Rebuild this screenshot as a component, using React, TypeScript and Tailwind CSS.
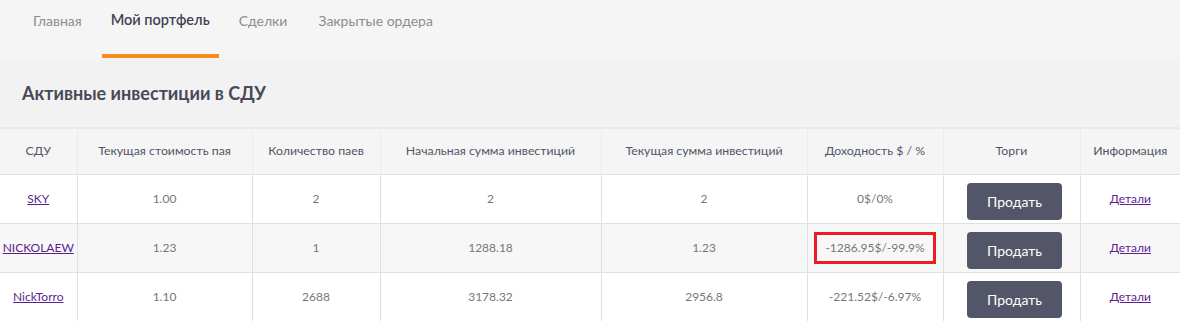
import React from "react";

const tabs = ["Главная", "Мой портфель", "Сделки", "Закрытые ордера"];

const rows = [
  { name: "SKY", price: "1.00", count: "2", start: "2", current: "2", profit: "0$/0%" },
  { name: "NICKOLAEW", price: "1.23", count: "1", start: "1288.18", current: "1.23", profit: "-1286.95$/-99.9%", marked: true },
  { name: "NickTorro", price: "1.10", count: "2688", start: "3178.32", current: "2956.8", profit: "-221.52$/-6.97%" },
];

export default function App() {
  return (
    <div className="min-h-screen bg-[#f3f3f3] font-['Lato','Open_Sans',sans-serif]">
      {/* tabs */}
      <nav className="flex h-[58px] gap-[9px] bg-[#f5f5f5] pl-[22px]">
        {tabs.map((t, i) => (
          <div
            key={t}
            className={
              "flex flex-col justify-between text-center " +
              (i === 1
                ? "w-[117px] pt-[9px] text-[14.5px] font-semibold text-[#3e4252]"
                : "px-[11px] pt-[10px] text-[14px] text-[#8c8c8c]")
            }
          >
            <span>{t}</span>
            <span className={"h-[4px] " + (i === 1 ? "bg-[#f68b1f]" : "")} />
          </div>
        ))}
      </nav>

      <div className="flex h-[69px] items-center bg-[#f2f2f2] pl-[22px] pt-[1px]">
        <h2 className="text-[18px] font-bold text-[#474a59]">Активные инвестиции в СДУ</h2>
      </div>

      <table className="w-full table-fixed border-collapse border-t-2 border-[#e9e9e9] bg-white text-center">
        <thead>
          <tr className="h-[46px] bg-[#f5f5f5] text-[12.3px] text-[#515566]">
            <th className="w-[77px] border-r border-[#ececec] font-normal">СДУ</th>
            <th className="w-[175px] border-r border-[#ececec] font-normal">Текущая стоимость пая</th>
            <th className="w-[128px] border-r border-[#ececec] font-normal">Количество паев</th>
            <th className="w-[221px] border-r border-[#ececec] font-normal">Начальная сумма инвестиций</th>
            <th className="w-[206px] border-r border-[#ececec] font-normal">Текущая сумма инвестиций</th>
            <th className="w-[136px] border-r border-[#ececec] font-normal">Доходность $ / %</th>
            <th className="w-[137px] border-r border-[#ececec] font-normal">Торги</th>
            <th className="font-normal">Информация</th>
          </tr>
        </thead>
        <tbody className="text-[12px] text-[#777777]">
          {rows.map((r, i) => (
            <tr key={r.name} className={"h-[49px] border-t border-[#e0e0e0] " + (i === 1 ? "bg-[#f7f7f7]" : "bg-white")}>
              <td className="border-r border-[#e0e0e0]">
                <a href="#" className="text-[#5b1f8f] underline">{r.name}</a>
              </td>
              <td className="border-r border-[#e0e0e0]">{r.price}</td>
              <td className="border-r border-[#e0e0e0]">{r.count}</td>
              <td className="border-r border-[#e0e0e0]">{r.start}</td>
              <td className="border-r border-[#e0e0e0]">{r.current}</td>
              <td className="border-r border-[#e0e0e0]">
                {r.marked ? (
                  <span className="inline-block border-[3px] border-[#ed1c24] px-[8px] py-[6px] leading-[14px]">
                    {r.profit}
                  </span>
                ) : (
                  r.profit
                )}
              </td>
              <td className="border-r border-[#e0e0e0] pl-[6px] pt-[6px]">
                <button className="h-[37px] w-[95px] rounded-[4px] bg-[#525668] text-[14px] text-white">
                  Продать
                </button>
              </td>
              <td>
                <a href="#" className="text-[#5b1f8f] underline">Детали</a>
              </td>
            </tr>
          ))}
        </tbody>
      </table>
    </div>
  );
}
